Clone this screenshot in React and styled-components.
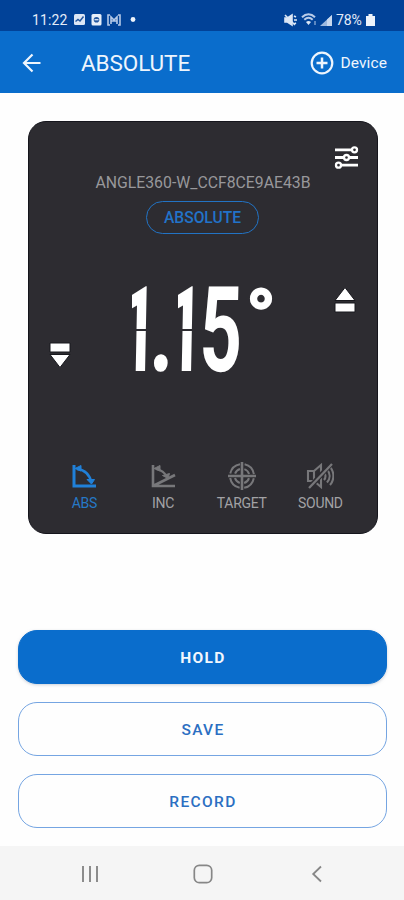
import styled, { createGlobalStyle } from 'styled-components'

const GlobalStyle = createGlobalStyle`
  * {
    box-sizing: border-box;
  }

  body {
    margin: 0;
    background: #fefefe;
    font-family: Roboto, "Liberation Sans", sans-serif;
  }

  button {
    font-family: inherit;
    cursor: pointer;
  }

  svg {
    display: block;
    flex: none;
  }
`

const Screen = styled.div`
  display: flex;
  flex-direction: column;
  width: 404px;
  height: 900px;
  overflow: hidden;
`

const StatusBar = styled.div`
  display: flex;
  align-items: center;
  justify-content: space-between;
  height: 31px;
  padding: 8px 29px 0 32px;
  background: #014298;
  color: #e4ecf8;
  font-size: 14px;
`

const StatusGroup = styled.div`
  display: flex;
  align-items: center;
  gap: ${({ $gap }) => $gap}px;
`

const StatusText = styled.span`
  width: ${({ $width }) => $width}px;
  white-space: nowrap;
  letter-spacing: ${({ $spacing }) => $spacing || 0}px;
`

const AppBar = styled.header`
  display: flex;
  align-items: center;
  height: 62px;
  padding: 1px 17px 0 22px;
  background: #0a6dcc;
  color: #eef5fd;
`

const Title = styled.h1`
  flex: 1;
  margin: 1px 0 0 39px;
  font-size: 22.5px;
  font-weight: 400;
  letter-spacing: -0.1px;
`

const IconButton = styled.button`
  display: flex;
  align-items: center;
  gap: 6px;
  padding: 0;
  border: 0;
  background: none;
  color: inherit;
  font-size: 15.5px;
  letter-spacing: 0.1px;
`

const Card = styled.section`
  display: flex;
  flex-direction: column;
  width: 350px;
  height: 413px;
  margin: 28px 0 0 28px;
  border: 1px solid #15151c;
  border-radius: 18px;
  background: #2d2c31;
`

const CardTop = styled.div`
  display: flex;
  justify-content: flex-end;
  height: 51px;
  padding: 23px 18px 0 0;
  color: #fff;
`

const DeviceName = styled.div`
  height: 20px;
  color: #98989b;
  font-size: 15.8px;
  line-height: 20px;
  text-align: center;
`

const ModeBadge = styled.div`
  width: 113px;
  height: 33px;
  margin: 8px 0 0 117px;
  border: 1px solid #2273c4;
  border-radius: 17px;
  color: #2273c9;
  font-size: 15.6px;
  font-weight: 500;
  line-height: 33px;
  text-align: center;
`

const Readout = styled.div`
  display: grid;
  grid-template-columns: 74px 1fr 70px;
  height: 120px;
  margin-top: 38px;
  color: #fff;
`

const TiltDown = styled.div`
  padding: 70px 0 0 20px;
`

const TiltUp = styled.div`
  padding: 15px 0 0 27px;
`

const Digits = styled.div`
  display: flex;
  height: 120px;
  padding-left: 22px;
  line-height: 118px;
`

const Digit = styled.span`
  display: flex;
  flex: none;
  justify-content: center;
  width: ${({ $width }) => $width}px;
  font-size: 119px;
  font-weight: 700;
  transform: scaleX(${({ $stretch }) => $stretch}) skewX(-2deg);
`

/* A thin gap across the middle splits the digit into upper and lower segments */
const SplitDigit = styled(Digit)`
  background: linear-gradient(#fff 57px, #2d2c31 57px, #2d2c31 59px, #fff 59px);
  background-clip: text;
  color: transparent;
`

const Degree = styled.span`
  margin: 3px 0 0 3px;
  font-size: 76px;
  font-weight: 900;
  line-height: 84px;
  -webkit-text-stroke: 1.5px #fff;
`

const Modes = styled.nav`
  display: grid;
  grid-template-columns: repeat(4, 78.7px);
  margin: 70px 0 0 16px;
`

const Mode = styled.button`
  display: flex;
  flex-direction: column;
  align-items: center;
  padding: 0;
  border: 0;
  background: none;
  color: ${({ $active }) => ($active ? '#2080d8' : '#77777a')};
  font-size: 14px;
  line-height: 17px;

  svg {
    height: 28px;
  }

  span {
    margin-top: 5px;
    color: ${({ $active }) => ($active ? '#2679c6' : '#a2a2a5')};
    letter-spacing: -0.3px;
  }
`

const Actions = styled.div`
  display: grid;
  gap: 18px;
  margin: 96px 17px 0 18px;
`

const ActionButton = styled.button`
  height: 54px;
  padding: 2px 0 0 1px;
  border: 1px solid ${({ $primary }) => ($primary ? '#0a6dcc' : '#75a5e2')};
  border-radius: 19px;
  background: ${({ $primary }) => ($primary ? '#0a6dcc' : '#fefefe')};
  box-shadow: ${({ $primary }) => ($primary ? '0 1px 3px #9aa4b580' : 'none')};
  color: ${({ $primary }) => ($primary ? '#f2f7fd' : '#2b6fc2')};
  font-size: 15.5px;
  font-weight: ${({ $primary }) => ($primary ? 700 : 500)};
  letter-spacing: 1.35px;
`

const SystemNav = styled.footer`
  display: grid;
  grid-template-columns: 112px 118px auto;
  align-items: center;
  height: 54px;
  margin-top: auto;
  padding: 2px 80px 0 81px;
  background: #f5f5f5;
  color: #878787;
`

const ImageIcon = () => (
  <svg width="13" height="13" viewBox="0 0 13 13">
    <rect x="1" y="1" width="11" height="11" rx="1.5" fill="#dce6f5" />
    <path d="M2.5 8.5 5 6.5 7 8l3.5-4.5" fill="none" stroke="#23569f" strokeWidth="1.5" />
  </svg>
)

const AppIcon = () => (
  <svg width="11" height="13" viewBox="0 0 11 13">
    <rect x="0.5" y="1" width="10" height="11.5" rx="1.5" fill="#e6eef9" />
    <circle cx="5.5" cy="6.7" r="2.8" fill="#23569f" />
    <path d="M3.5 6.7h4" stroke="#dce6f5" strokeWidth="1.3" />
  </svg>
)

const CastIcon = () => (
  <svg width="14" height="12" viewBox="0 0 14 12" fill="none" stroke="#b5c9e8" strokeWidth="1.6">
    <path d="M3 1H1v10h2M11 1h2v10h-2M4 10V3l3 3 3-3v7M4 7h6" />
  </svg>
)

const MuteIcon = () => (
  <svg width="14" height="14" viewBox="0 0 14 14" fill="none" stroke="#dce7f6" strokeWidth="1.6">
    <path d="M1 5h2.5L8 2v10L3.5 9H1z" fill="#dce7f6" />
    <path d="m1 2 10 10M10 3l2 1M10 7h3M10 11l2-1" />
  </svg>
)

const WifiIcon = () => (
  <svg width="16" height="13" viewBox="0 0 16 13" fill="none" stroke="#b9cce9" strokeWidth="2">
    <path d="M1 4.3c4-4 9-4 13 0M3.3 6.7c2.7-2.5 5.7-2.5 8.4 0" />
    <path d="m7.5 12-2.5-3q2.5-2 5 0z" fill="#dce7f6" stroke="none" />
    <path d="M14 8v4" strokeWidth="1" />
  </svg>
)

const SignalIcon = () => (
  <svg width="13" height="12" viewBox="0 0 13 12">
    <path d="M0 12 12 1v11z" fill="#9db9df" />
    <path d="M7 5.6 12 1v11H7z" fill="#c8d8ee" />
  </svg>
)

const BatteryIcon = () => (
  <svg width="9" height="12" viewBox="0 0 9 12" fill="#edf3fb">
    <path d="M2.5 0h4v2H9v10H0V2h2.5z" />
  </svg>
)

const BackIcon = () => (
  <svg width="20" height="20" viewBox="0 0 20 20" fill="none" stroke="currentColor" strokeWidth="2.2">
    <path d="M18.5 10H2M10.5 1.5 2 10l8.5 8.5" />
  </svg>
)

const PlusIcon = () => (
  <svg width="24" height="24" viewBox="0 0 24 24" fill="none" stroke="currentColor" strokeWidth="2.2">
    <circle cx="12" cy="12" r="10.3" />
    <path d="M12 6.5v11M6.5 12h11" strokeWidth="2.5" />
  </svg>
)

const SlidersIcon = () => (
  <svg width="25" height="25" viewBox="0 0 25 25" fill="#2d2c31" stroke="currentColor" strokeWidth="2.3">
    <path d="M1 4.8h23M1 12.5h23M1 20.2h23" strokeWidth="2.8" />
    <circle cx="20.5" cy="4.8" r="2.5" />
    <circle cx="12.5" cy="12.5" r="2.5" />
    <circle cx="4.5" cy="20.2" r="2.5" />
  </svg>
)

const AbsIcon = () => (
  <svg width="26" height="26" viewBox="0 0 26 26" fill="none" stroke="currentColor" strokeWidth="2.4">
    <path d="M3 2v21h22" strokeWidth="3" />
    <path d="M6 6c8 1 13 6 14.5 14" />
    <path d="M10 2.5V8L4 5.5zM16 16.5h7.5L20.5 21z" fill="currentColor" strokeWidth="1" />
  </svg>
)

const IncIcon = () => (
  <svg width="26" height="26" viewBox="0 0 26 26" fill="none" stroke="currentColor" strokeWidth="2.2">
    <path d="M3 2v21h22M3 23l22-11" strokeWidth="2.6" />
    <path d="M6 6c6 1 9 4 11 8" />
    <path d="M10 2.5V8L4 5.5zM12.5 12.5l7-2-1.5 5z" fill="currentColor" strokeWidth="1" />
  </svg>
)

const TargetIcon = () => (
  <svg width="28" height="28" viewBox="0 0 28 28" fill="none" stroke="currentColor">
    <circle cx="14" cy="14" r="12" strokeWidth="2" strokeDasharray="14.2 4.65" strokeDashoffset="-2.3" />
    <circle cx="14" cy="14" r="7.3" strokeWidth="2" strokeDasharray="7 4.47" strokeDashoffset="-2.2" />
    <path d="M14 0v28M0 14h28" strokeWidth="2.6" />
  </svg>
)

const SoundIcon = () => (
  <svg width="28" height="28" viewBox="0 0 28 28" fill="none" stroke="currentColor" strokeWidth="2.1">
    <path d="M2 9h6v10H2zM8 9l7-6v22l-7-6M18 10c2 2 2 6 0 8M21 7.5c3.5 4 3.5 9 0 13M24 5c4.5 5 4.5 13 0 18" />
    <path d="M26 1 3 26" stroke="#2d2c31" strokeWidth="5" />
    <path d="M26 2 3 26" strokeWidth="2.3" />
  </svg>
)

const TiltIcon = ({ down }) => (
  <svg width="22" height="26" viewBox="0 0 22 26" fill="currentColor" stroke="#19191e" strokeWidth="1">
    {down
      ? <path d="M1 1h20v9H1zM1 12.5h20L11 25.5z" />
      : <path d="M1 25h20v-9H1zM1 13.5h20L11 .5z" />}
  </svg>
)

const RecentIcon = () => (
  <svg width="18" height="18" viewBox="0 0 18 18" stroke="currentColor" strokeWidth="1.9">
    <path d="M2 1v16M9 1v16M16 1v16" />
  </svg>
)

const HomeIcon = () => (
  <svg width="20" height="20" viewBox="0 0 20 20" fill="none" stroke="currentColor" strokeWidth="1.7">
    <rect x="1.3" y="1.3" width="17.4" height="17.4" rx="5" />
  </svg>
)

const PreviousIcon = () => (
  <svg width="12" height="18" viewBox="0 0 12 18" fill="none" stroke="currentColor" strokeWidth="1.8">
    <path d="M10 1.5 2.2 9l7.8 7.5" />
  </svg>
)

const modes = [
  { label: 'ABS', Icon: AbsIcon, active: true },
  { label: 'INC', Icon: IncIcon },
  { label: 'TARGET', Icon: TargetIcon },
  { label: 'SOUND', Icon: SoundIcon },
]

const App = () => {
  return (
    <Screen>
      <GlobalStyle />
      <StatusBar>
        <StatusGroup $gap={5}>
          <StatusText $width={36} $spacing={0.1}>11:22</StatusText>
          <ImageIcon />
          <AppIcon />
          <CastIcon />
          <svg width="16" height="12"><circle cx="7" cy="5.5" r="2.4" fill="#edf3fb" /></svg>
        </StatusGroup>
        <StatusGroup $gap={3}>
          <MuteIcon />
          <WifiIcon />
          <SignalIcon />
          <StatusText $width={27} $spacing={-0.1}>78%</StatusText>
          <BatteryIcon />
        </StatusGroup>
      </StatusBar>

      <AppBar>
        <IconButton aria-label="Back"><BackIcon /></IconButton>
        <Title>ABSOLUTE</Title>
        <IconButton><PlusIcon />Device</IconButton>
      </AppBar>

      <Card>
        <CardTop><SlidersIcon /></CardTop>
        <DeviceName>ANGLE360-W_CCF8CE9AE43B</DeviceName>
        <ModeBadge>ABSOLUTE</ModeBadge>
        <Readout>
          <TiltDown><TiltIcon down /></TiltDown>
          <Digits>
            <SplitDigit $width={28} $stretch={0.56}>1</SplitDigit>
            <Digit $width={18} $stretch={0.72}>.</Digit>
            <SplitDigit $width={28} $stretch={0.56}>1</SplitDigit>
            <Digit $width={44} $stretch={0.62}>5</Digit>
            <Degree>°</Degree>
          </Digits>
          <TiltUp><TiltIcon /></TiltUp>
        </Readout>
        <Modes>
          {modes.map(({ label, Icon, active }) => (
            <Mode key={label} $active={active}>
              <Icon />
              <span>{label}</span>
            </Mode>
          ))}
        </Modes>
      </Card>

      <Actions>
        <ActionButton $primary>HOLD</ActionButton>
        <ActionButton>SAVE</ActionButton>
        <ActionButton>RECORD</ActionButton>
      </Actions>

      <SystemNav>
        <RecentIcon />
        <HomeIcon />
        <PreviousIcon />
      </SystemNav>
    </Screen>
  )
}

export default App
